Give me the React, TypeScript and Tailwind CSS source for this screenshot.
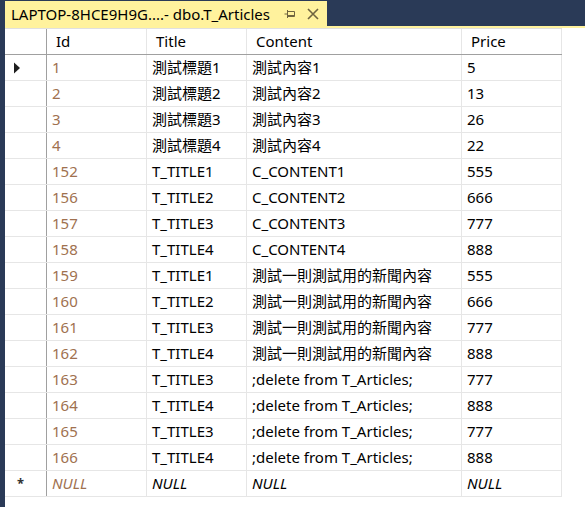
import React from "react";

type Row = { id: string; title: string; content: string; price: string };

const rows: Row[] = [
    { id: "1", title: "測試標題1", content: "測試內容1", price: "5" },
    { id: "2", title: "測試標題2", content: "測試內容2", price: "13" },
    { id: "3", title: "測試標題3", content: "測試內容3", price: "26" },
    { id: "4", title: "測試標題4", content: "測試內容4", price: "22" },
    { id: "152", title: "T_TITLE1", content: "C_CONTENT1", price: "555" },
    { id: "156", title: "T_TITLE2", content: "C_CONTENT2", price: "666" },
    { id: "157", title: "T_TITLE3", content: "C_CONTENT3", price: "777" },
    { id: "158", title: "T_TITLE4", content: "C_CONTENT4", price: "888" },
    { id: "159", title: "T_TITLE1", content: "測試一則測試用的新聞內容", price: "555" },
    { id: "160", title: "T_TITLE2", content: "測試一則測試用的新聞內容", price: "666" },
    { id: "161", title: "T_TITLE3", content: "測試一則測試用的新聞內容", price: "777" },
    { id: "162", title: "T_TITLE4", content: "測試一則測試用的新聞內容", price: "888" },
    { id: "163", title: "T_TITLE3", content: ";delete from T_Articles;", price: "777" },
    { id: "164", title: "T_TITLE4", content: ";delete from T_Articles;", price: "888" },
    { id: "165", title: "T_TITLE3", content: ";delete from T_Articles;", price: "777" },
    { id: "166", title: "T_TITLE4", content: ";delete from T_Articles;", price: "888" },
];

const cell = "h-full flex items-center pl-[5px] border-r border-[#e6e6e6] whitespace-nowrap overflow-hidden";
const head = "h-full flex items-center pl-[9px] border-r border-[#e6e6e6] whitespace-nowrap";

function PinIcon() {
    return (
        <svg width="12" height="10" viewBox="0 0 12 10" className="text-[#6f6440]">
            <path d="M0.5 5H3.5M3.5 1V9M3.5 2.5H10.5V7.5H3.5M3.5 6.5H10.5" stroke="currentColor" strokeWidth="1" fill="none" />
        </svg>
    );
}

function CloseIcon() {
    return (
        <svg width="12" height="12" viewBox="0 0 12 12" className="text-[#6f6440]">
            <path d="M1 1L11 11M11 1L1 11" stroke="currentColor" strokeWidth="1.6" fill="none" />
        </svg>
    );
}

export default function App() {
    return (
        <div
            className="w-[585px] h-[507px] bg-[#2a3a57] flex flex-col overflow-hidden"
            style={{ fontFamily: '"Noto Sans", "Noto Sans CJK TC", sans-serif' }}
        >
            {/* document tab */}
            <div className="h-[26px] pl-[5px] flex items-end">
                <div className="h-[25px] w-[322px] bg-[#fff29d] flex items-center pl-[6px] text-[15px] text-black">
                    <span className="leading-none pt-[2px]">LAPTOP-8HCE9H9G....- dbo.T_Articles</span>
                    <span className="ml-auto mr-[8px] flex items-center gap-[11px]">
                        <PinIcon />
                        <CloseIcon />
                    </span>
                </div>
            </div>
            <div className="ml-[5px] h-[2px] bg-[#fff29d]" />

            {/* grid */}
            <div className="ml-[5px] flex-1 bg-white text-[15px] text-black">
                <div className="h-[27px] flex border-t border-[#e0e0e0] border-b border-b-[#a0a0a0] w-[557px]">
                    <div className="w-[42px] h-full border-r border-[#a0a0a0]" />
                    <div className={`${head} w-[100px]`}>Id</div>
                    <div className={`${head} w-[100px]`}>Title</div>
                    <div className={`${head} w-[215px]`}>Content</div>
                    <div className={`${head} w-[100px]`}>Price</div>
                </div>
                {rows.map((r, i) => (
                    <div key={r.id} className="h-[26px] flex border-b border-[#e6e6e6] w-[557px]">
                        <div className="w-[42px] h-full border-r border-[#a0a0a0] flex items-center pl-[8px]">
                            {i === 0 && (
                                <svg width="8" height="12" viewBox="0 0 8 12">
                                    <path d="M1 0.5L7 6L1 11.5Z" fill="#1e1e1e" />
                                </svg>
                            )}
                        </div>
                        <div className={`${cell} w-[100px] text-[#a0714f]`}>{r.id}</div>
                        <div className={`${cell} w-[100px]`}>{r.title}</div>
                        <div className={`${cell} w-[215px]`}>{r.content}</div>
                        <div className={`${cell} w-[100px]`}>{r.price}</div>
                    </div>
                ))}
                <div className="h-[26px] flex border-b border-[#e6e6e6] w-[557px] italic">
                    <div className="w-[42px] h-full border-r border-[#a0a0a0] flex items-center pl-[12px] not-italic font-bold text-[13px] text-[#333]">
                        *
                    </div>
                    <div className={`${cell} w-[100px] text-[#a0714f]`}>NULL</div>
                    <div className={`${cell} w-[100px]`}>NULL</div>
                    <div className={`${cell} w-[215px]`}>NULL</div>
                    <div className={`${cell} w-[100px]`}>NULL</div>
                </div>
            </div>
        </div>
    );
}
